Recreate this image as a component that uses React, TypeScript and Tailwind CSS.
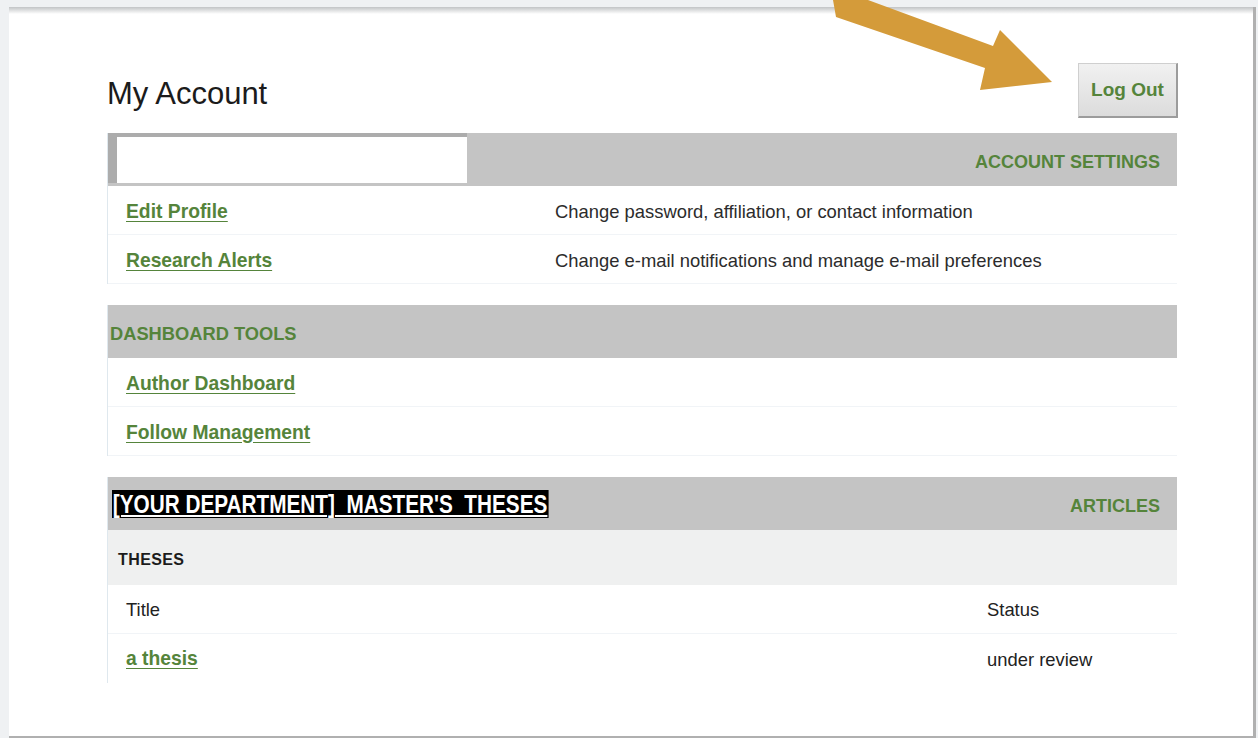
import React from "react";

const green = "text-[#55843b]";

function HeaderBar({ left, right }: { left?: React.ReactNode; right?: React.ReactNode }) {
  return (
    <div className="flex h-[53px] items-center justify-between bg-[#c4c4c4]">
      <div className="flex h-full items-center">{left}</div>
      {right ? (
        <div className={`pr-[17px] pt-[5px] text-[18px] font-bold ${green}`}>{right}</div>
      ) : null}
    </div>
  );
}

function LinkRow({ label, desc }: { label: string; desc?: string }) {
  return (
    <div className="flex h-[49px] items-center border-b border-[#f1f4f7] pl-[18px] pt-[4px]">
      <a className={`w-[429px] text-[19.3px] font-bold underline underline-offset-[3px] ${green}`}>{label}</a>
      {desc ? <span className="text-[18.4px] text-[#2c2c2c]">{desc}</span> : null}
    </div>
  );
}

function Section({ children, className = "" }: { children: React.ReactNode; className?: string }) {
  return <div className={`border-l border-[#dfe8ee] ${className}`}>{children}</div>;
}

export default function App() {
  return (
    <div className="relative h-[738px] w-[1258px] overflow-hidden bg-[#eff1f3] pl-[9px] pt-[7px] font-['Liberation_Sans',Arial,sans-serif]">
      <div className="h-[731px] w-[1247px] border-b-2 border-r-[3px] border-[#b0b0b0] bg-white">
        {/* soft top shadow of the page */}
        <div className="h-[7px] bg-gradient-to-b from-[#c2c4c6] to-white" />

        <div className="pl-[98px] pt-[49px]">
          {/* title row */}
          <div className="flex w-[1071px] items-start justify-between">
            <h1 className="mt-[16px] text-[31px] leading-[30px] text-[#1b1b1b]">My Account</h1>
            <button className="flex h-[55px] w-[100px] items-center justify-center border border-[#cfcfcf] border-b-[#9c9c9c] border-r-[#9c9c9c] border-b-2 border-r-2 bg-gradient-to-b from-[#f1f1f1] to-[#dcdcdc] text-[19px] font-bold text-[#55843b]">
              Log Out
            </button>
          </div>

          <div className="w-[1070px]">
            {/* account settings */}
            <Section className="mt-[15px]">
              <HeaderBar
                left={
                  <div className="h-[50px] w-[359px] self-start border-l-[9px] border-t-[4px] border-[#acacac] bg-white" />
                }
                right="ACCOUNT SETTINGS"
              />
              <LinkRow label="Edit Profile" desc="Change password, affiliation, or contact information" />
              <LinkRow label="Research Alerts" desc="Change e-mail notifications and manage e-mail preferences" />
            </Section>

            {/* dashboard tools */}
            <Section className="mt-[21px]">
              <HeaderBar
                left={<span className={`pl-[2px] pt-[5px] text-[18.3px] font-bold ${green}`}>DASHBOARD TOOLS</span>}
              />
              <LinkRow label="Author Dashboard" />
              <LinkRow label="Follow Management" />
            </Section>

            {/* articles */}
            <Section className="mt-[21px]">
              <HeaderBar
                left={
                  <span className="ml-[4px] mt-[1px] inline-block origin-left scale-x-[0.83] whitespace-nowrap bg-black px-[1px] text-[25px] font-bold leading-[28px] text-white underline decoration-[1.5px] underline-offset-[2px]">
                    [YOUR DEPARTMENT]&nbsp; MASTER'S&nbsp; THESES
                  </span>
                }
                right="ARTICLES"
              />
              <div className="flex h-[55px] items-center bg-[#eff0f0] pl-[10px] pt-[4px] text-[16px] font-bold tracking-[0.4px] text-[#1c1c1c]">
                THESES
              </div>
              <div className="flex h-[49px] items-center border-b border-[#f1f4f7] pl-[18px] pt-[2px] text-[18.4px] text-[#222]">
                <span className="w-[861px]">Title</span>
                <span>Status</span>
              </div>
              <div className="flex h-[49px] items-center pl-[18px] pt-[2px]">
                <a className={`w-[861px] text-[19.3px] font-bold underline underline-offset-[3px] ${green}`}>a thesis</a>
                <span className="text-[18.4px] text-[#222]">under review</span>
              </div>
            </Section>
          </div>
        </div>
      </div>

      {/* callout arrow pointing at the log out button */}
      <svg
        className="pointer-events-none absolute left-0 top-0"
        width="1258"
        height="738"
        viewBox="0 0 1258 738"
      >
        <polygon
          points="833,0 868,0 993,46 1000,30 1052,82 980,90 985,68 836,17"
          fill="#d49b3a"
        />
      </svg>
    </div>
  );
}
